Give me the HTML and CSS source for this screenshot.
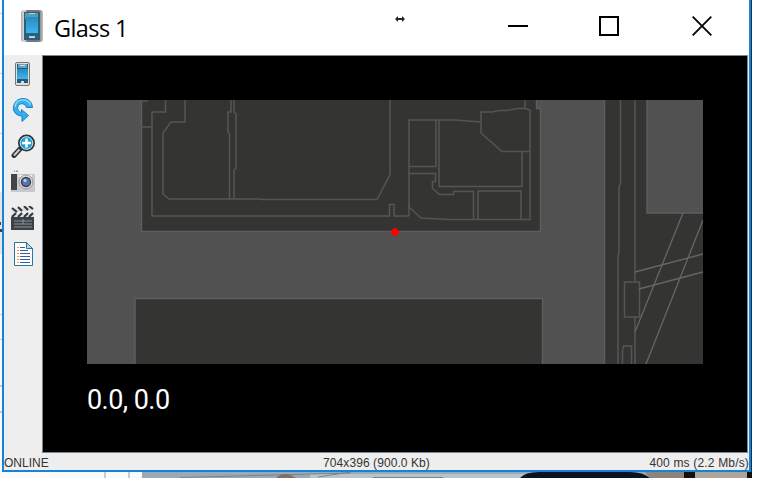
FILE: index.html
```
<!DOCTYPE html>
<html lang="en">
<head>
<meta charset="utf-8">
<title>Glass 1</title>
<link rel="stylesheet" href="styles.css">
</head>
<body>
<div class="desktop">
  <svg class="backdrop" width="758" height="478" viewBox="0 0 758 478">
    <path fill="#fafafa" d="M0 0h752v478H0z"/>
    <path fill="#e4e4e4" d="M0 192h2v62H0z"/>
    <path fill="#ccc" d="M0 13h2v1H0zM0 73h2v1H0zM0 133h2v1H0zM0 314h2v1H0zM0 339h2v1H0zM0 385h2v2H0zM0 411h2v2H0zM104 472h2v6h-2zM128 472h2v6h-2z"/>
    <path fill="#345" d="M0 222h1v3H0zM0 229h2v3H0z"/>
    <path fill="#9aaab4" d="M142 472h610v6H142z"/>
    <path fill="#b7c4cc" d="M310 474h215l-5 4H310z"/>
    <path stroke="#78858d" d="M180 477.5L350 473M318 477l33-5M373 477.5h70"/>
    <path fill="#806e67" d="M276 478q8-8 20 0z"/>
    <path fill="#0b1320" d="M520 478q5-6 19-6h91q13 0 20 6z"/>
    <path fill="#8d857b" d="M645 472h40v6h-35z"/>
    <path fill="#aca59a" d="M695 472h52v6h-52z"/>
    <path fill="#111" d="M684 472h11v6h-11zM747 472h5v6h-5z"/>
    <path fill="#18324b" d="M751 0h1v472h-1z"/>
  </svg>
  <main class="window">
    <header class="titlebar">
      <svg class="app-icon" width="24" height="34" viewBox="0 0 24 34">
        <defs><linearGradient id="metal"><stop stop-color="#aaa7b0"/><stop offset=".15" stop-color="#ddd"/><stop offset=".3" stop-color="#777"/><stop offset=".8" stop-color="#777"/><stop offset="1" stop-color="#c5bfc6"/></linearGradient><linearGradient id="glass" x2="0" y2="1"><stop stop-color="#238cc3"/><stop offset="1" stop-color="#43b4ea"/></linearGradient></defs>
        <rect x="1" y="1" width="22" height="32" rx="3" fill="url(#metal)"/><path fill="#285f7b" d="M4 3h16v28H4z"/><path fill="#5b9bb1" d="M5 4h13v6H5z"/><path fill="url(#glass)" d="M6 8h12v16H6z"/><path fill="#b6d2dc" d="M9 4h6v1H9zM9 27h6v2H9z"/>
      </svg>
      <h1 class="title">Glass 1</h1>
      <svg class="resize" width="10" height="6" viewBox="0 0 10 6"><path fill="#222" d="M0 3l3-3v2h4V0l3 3-3 3V4H3v2z"/></svg>
      <div class="controls">
        <svg width="20" height="20" viewBox="0 0 20 20"><path d="M0 10h20" stroke="#000" stroke-width="2"/></svg>
        <svg width="20" height="20" viewBox="0 0 20 20"><path d="M1 1h18v18H1z" fill="none" stroke="#000" stroke-width="2"/></svg>
        <svg width="20" height="20" viewBox="0 0 20 20"><path d="M.7.7l18.6 18.6M19.3.7L.7 19.3" stroke="#000" stroke-width="1.8"/></svg>
      </div>
    </header>
    <div class="workspace">
      <nav class="tools">
        <svg viewBox="0 0 24 24"><rect x="4.500" y=".5" width="14" height="23" rx="1.500" fill="#ddd" stroke="#777"/><path fill="#255b78" d="M6 2h11v19H6z"/><path fill="#67a4ba" d="M7 2h9v4H7z"/><path fill="url(#glass)" d="M6 7h11v10H6z"/><path fill="#cde" d="M9 3h5v1H9zM10 19h3v2h-3z"/></svg>
        <svg viewBox="0 0 24 24"><path d="M10 18C4 17 2 13 2.500 9 3 4 7 .5 12 .5c5 0 9 3 9.500 9h-6c-1-4-6-5-8-2-2 3 0 6 3 7v-3l7 6-6.500 6v-5.500z" fill="#35aeea" stroke="#1682d2"/><path d="M4 9c1-9 13-9 15.500-2" fill="none" stroke="#83daf9" stroke-width="1.500"/></svg>
        <svg viewBox="0 0 24 24"><path d="M9 15l-6 6.500" stroke="#333" stroke-width="5" stroke-linecap="round"/><path d="M8.500 15.500L3 21.500" stroke="#ccc" stroke-width="2"/><circle cx="15.500" cy="9" r="7.600" fill="#209fd7" stroke="#333" stroke-width="1.800"/><circle cx="15.500" cy="9" r="6.300" fill="none" stroke="#b8e9f8"/><path d="M15.500 4.500v9M11 9h9" stroke="#fff" stroke-width="2.500"/></svg>
        <svg viewBox="0 0 24 24"><path fill="#999" d="M3 .5h1v1.500H3zM5 .5h2v1.500H5z"/><path fill="#c9c7d2" d="M0 4h24v18H0z"/><path fill="#444" d="M0 4h6v16H0z"/><path fill="#eee" d="M7 5h14v2H7z"/><circle cx="15" cy="12" r="7" fill="#ddd" stroke="#999"/><circle cx="15" cy="12" r="4.500" fill="#5275bc" stroke="#444" stroke-width="1.500"/><circle cx="14" cy="10.500" r="1.500" fill="#b6d3f8"/></svg>
        <svg viewBox="0 0 24 24"><path fill="#3b4148" d="M0 11h23v13H0z"/><path fill="#ddd" d="M0 8h23v3H0zM0 3l21-3 1 4L1 7z"/><path d="M1 2l5 4M7 1l4 4M13 0l4 4M18 0l4 3M5 7l-4 4M11 7l-4 4M17 7l-4 4M22 7l-4 4" stroke="#30363b" stroke-width="2"/><path d="M3 15h18M3 18h18M3 21h18M12 13v5" stroke="#8d949a"/></svg>
        <svg viewBox="0 0 24 24"><path d="M3.500.5h12l6 6v17h-18z" fill="#fff" stroke="#29799b"/><path d="M15.500.5v6h6z" fill="#b8d8e4" stroke="#29799b"/><path d="M6 5.500h2M6 8.500h2M6 11.500h2M6 14.500h2M6 17.500h2M6 20.500h2" stroke="#ff9b20"/><path d="M9 5.500h5M9 8.500h8M9 11.500h10M9 14.500h10M9 17.500h10M9 20.500h10" stroke="#355ca8"/></svg>
      </nav>
      <section class="screen">
        <svg class="map" width="616" height="264" viewBox="87 100 616 264">
          <path fill="#515151" d="M87 100h616v264H87z"/>
          <g fill="#343432" stroke="#5e5e5e" stroke-width="1.400">
            <path d="M141.500 99h395v9.500h4v123h-399z"/>
            <path d="M135 298.500h407.500V366H135z"/>
            <path d="M604.500 99H647v114h58v153H604.500z"/>
          </g>
          <g fill="none" stroke="#555" stroke-width="1.500">
            <path d="M141 101h7M165.500 100v12h-13.500v104h237.500v-11.500h4.500v11.500h15M141 127h11M185 100v22h-14l-8 11v61l6 5h92l1 .5h115l13-25V100"/>
            <path d="M231 100v12h-3v20l1.500 2v65M234 100v12l2 2v54l-2 2v29"/>
            <path d="M409 216v-96h46l26 2M409 166.500h27V120M409 173.500h26.500v8h-3v7l7 6h14v-3h20v28M409 207l12 11 28 1.500h81V110l-5-1.500h-7l-11 2h-8l-7 1.500h-11v21l21 18.500h28M525 100v8M439 120v66.500h83v-34M478 219v-28h43v28"/>
            <path d="M620.500 100v84l-1.500 3v65l-1 4v108M635 100v182M635 317v47M624.500 282h15v35h-15zM622.500 364v-14l1-4h8v18"/>
            <path d="M683 213l-48 119M703 220l-57 144M635 272l68-18M639 289l64-17" stroke="#666" stroke-width="1.300"/>
          </g>
          <path fill="#f00" d="M394 228h2l3 3v2l-3 3h-2l-3-3v-2z"/>
        </svg>
        <p class="coords">0.0, 0.0</p>
      </section>
    </div>
    <footer class="status"><span>ONLINE</span><span>704x396 (900.0 Kb)</span><span>400 ms (2.2 Mb/s)</span></footer>
  </main>
</div>
</body>
</html>
```
FILE: styles.css
```
* { box-sizing: border-box; }
body { margin: 0; background: #fff; overflow: hidden; }
.desktop { display: grid; width: 758px; height: 478px; }
.backdrop, .window { grid-area: 1 / 1; }
.window { width: 749px; height: 472px; margin-left: 2px; border: solid #1683d8; border-width: 0 2px 2px; background: #eee; display: flex; flex-direction: column; z-index: 1; }
.titlebar { height: 55px; display: flex; background: #fff; flex: none; }
.app-icon { margin: 9px 0 0 16px; }
.title { width: 339px; margin: 11px 0 0 10px; font: 23.5px/34px "Open Sans", sans-serif; letter-spacing: -.6px; color: #000; }
.resize { margin: 16px 0 0 2px; }
.controls { display: flex; gap: 71px; margin: 16px 0 0 103px; }
.controls svg:last-child { margin-left: 2px; }
.workspace { height: 397px; display: flex; flex: none; }
.tools { width: 38px; padding: 7px 0 0 7px; display: flex; flex-direction: column; gap: 12px; }
.tools svg { width: 24px; height: 24px; }
.screen { width: 706px; height: 398px; border: 1px solid #788796; background: #000; padding: 44px; }
.map { display: block; }
.coords { margin: 18px 0 0; color: #fff; font: 27px/36px Roboto, sans-serif; letter-spacing: -.55px; }
.status { height: 18px; padding-top: 3px; display: grid; grid-template-columns: 1fr 1fr 1fr; color: #333; font: 12px/16px "Liberation Sans", sans-serif; }
.status span:nth-child(2) { text-align: center; letter-spacing: .08px; }
.status span:last-child { text-align: right; letter-spacing: .17px; }
```
